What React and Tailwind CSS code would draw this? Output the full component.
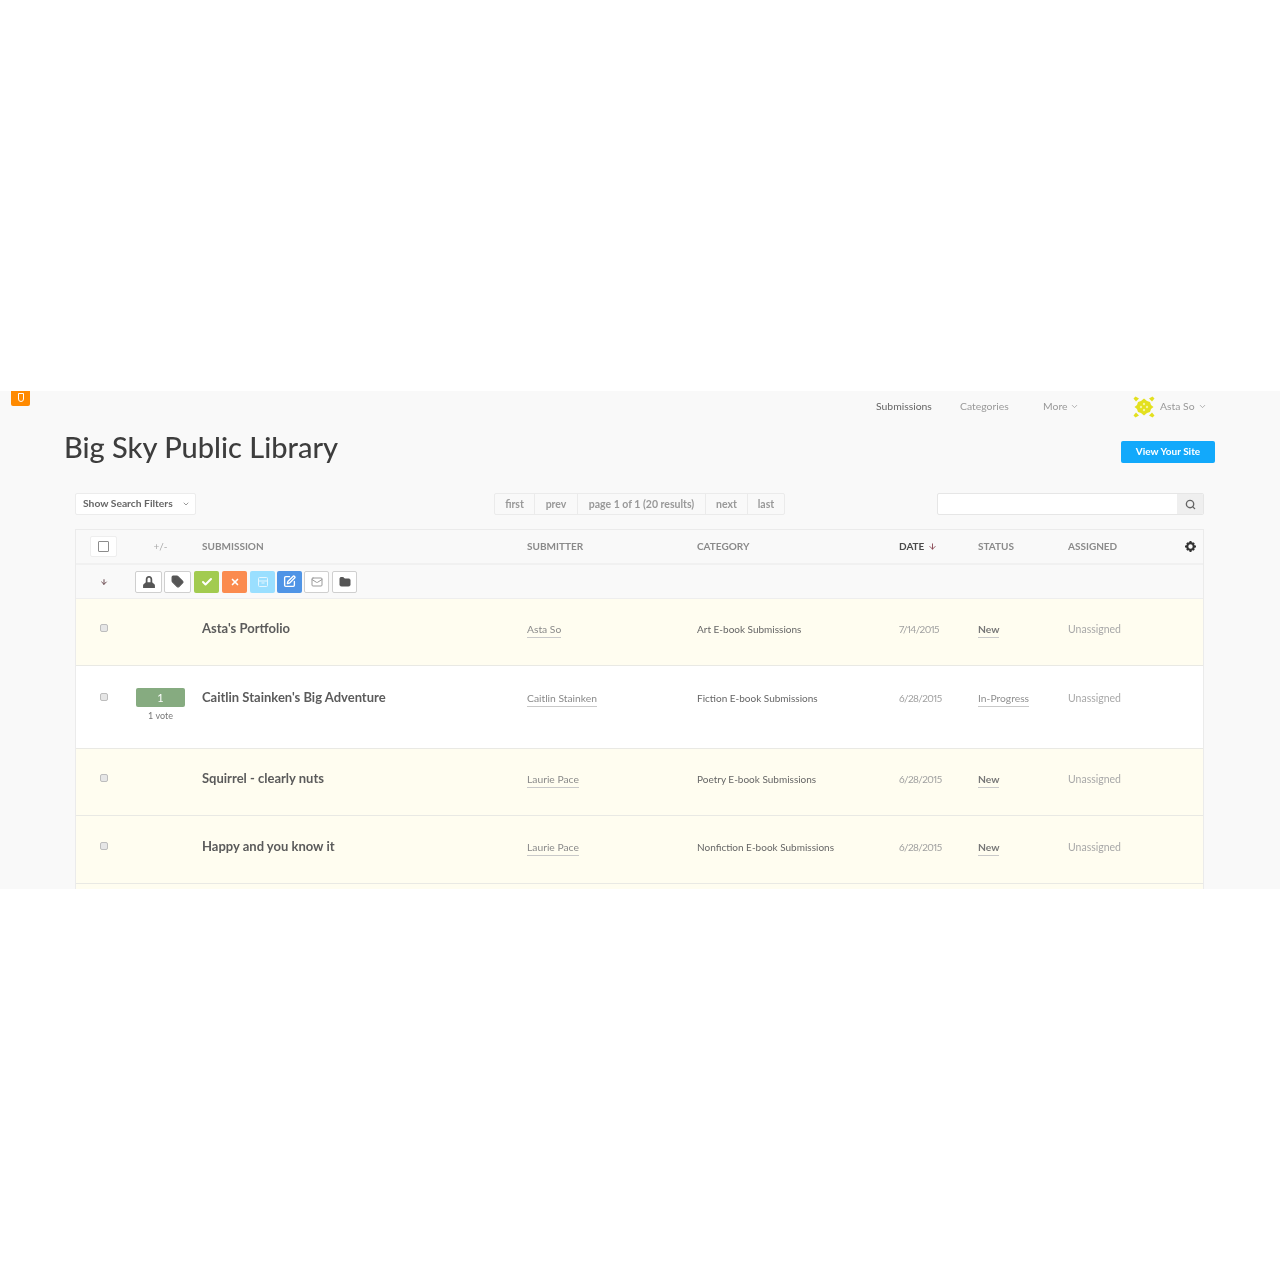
import React from 'react';
import { ChevronDown, Check, X, Mail, Folder, Tag, ArrowDown, SquarePen, Search } from 'lucide-react';

const rowCols = 'grid grid-cols-[55px_59px_337px_170px_202px_79px_90px_1fr]';

const rows = [
  { title: "Asta's Portfolio", who: 'Asta So', cat: 'Art E-book Submissions', date: '7/14/2015', status: 'New', height: 'h-[67px]', fresh: true },
  { title: "Caitlin Stainken's Big Adventure", who: 'Caitlin Stainken', cat: 'Fiction E-book Submissions', date: '6/28/2015', status: 'In-Progress', height: 'h-[83px] pt-[2px]', votes: 1 },
  { title: 'Squirrel - clearly nuts', who: 'Laurie Pace', cat: 'Poetry E-book Submissions', date: '6/28/2015', status: 'New', height: 'h-[67px]', fresh: true },
  { title: 'Happy and you know it', who: 'Laurie Pace', cat: 'Nonfiction E-book Submissions', date: '6/28/2015', status: 'New', height: 'h-[68px] pt-[1px]', fresh: true },
];

const Avatar = () => (
  <svg width="22" height="22" viewBox="0 0 22 22" fill="#e3e01f">
    <path d="M11 2.500l3 2.500 3 1 1 3 2.500 2-2.500 2-1 3-3 1-3 2.500-3-2.500-3-1-1-3-2.500-2 2.500-2 1-3 3-1z" />
    <g fill="#f4f3a0">
      <circle cx="11" cy="8" r="1.200" />
      <circle cx="8" cy="11" r="1.200" />
      <circle cx="14" cy="11" r="1.200" />
      <circle cx="11" cy="14" r="1.200" />
    </g>
    <path d="M.5 2.500L2.500.5 6 2.500 3 5.500zM21.500 2.500L19.500.5 16 2.500 19 5.500zM.5 19.500l2 2L6 19.500 3 16.500zM21.500 19.500l-2 2-3.500-2 3-3z" />
  </svg>
);

const UserLock = () => (
  <svg width="14" height="14" viewBox="0 0 13 13" fill="#555">
    <path d="M6.500 1C4.600 1 3.500 2.300 3.500 4v2.200c0 .8-.5 1.300-1.300 1.800C1.400 8.500 1 9 1 10v2h11v-2c0-1-.4-1.500-1.200-2-.8-.5-1.300-1-1.300-1.800V4c0-1.700-1.100-3-3-3zm0 1.600c.9 0 1.400.6 1.400 1.500v2.600H5.100V4.100c0-.9.5-1.500 1.400-1.500z" />
  </svg>
);

const Box = () => (
  <svg width="12" height="12" viewBox="0 0 12 12" fill="none" stroke="#e4f6ff" strokeWidth="1">
    <rect x="1.500" y="1.500" width="9" height="9" rx="1" />
    <path d="M1.500 5h9M4.500 7h3" />
  </svg>
);

const Gear = () => (
  <svg width="11" height="11" viewBox="0 0 11 11">
    <circle cx="5.500" cy="5.500" r="3.300" fill="none" stroke="#333" strokeWidth="2.200" />
    <path d="M4.500 0h2v2h-2zM4.500 9h2v2h-2zM0 4.500h2v2H0zM9 4.500h2v2H9zM1.200 2.600l1.400-1.400 1 1-1.400 1.400zM8.400 9.800l1.400-1.400-1-1-1.400 1.400zM9.800 2.600L8.400 1.200l-1 1 1.400 1.400zM2.600 9.800L1.200 8.400l1-1 1.400 1.400z" fill="#333" />
  </svg>
);

const ToolButton = ({ className, children }) => (
  <div className={`w-[25px] h-[22px] flex items-center justify-center rounded-[2px] ${className}`}>{children}</div>
);

const Toolbar = () => (
  <div className="flex items-center gap-[3px]">
    <ToolButton className="w-[27px] bg-white border border-[#cfcfcf]"><UserLock /></ToolButton>
    <ToolButton className="w-[27px] -ml-px bg-white border border-[#cfcfcf]"><Tag size={13} fill="#555" stroke="#555" /></ToolButton>
    <ToolButton className="bg-[#a2cb50]"><Check size={12} strokeWidth={4} color="#fff" /></ToolButton>
    <ToolButton className="bg-[#fb8b4f]"><X size={10} strokeWidth={4} color="#fff" /></ToolButton>
    <ToolButton className="bg-[#9adfff]"><Box /></ToolButton>
    <ToolButton className="-ml-px bg-[#4f94e6]"><SquarePen size={13} strokeWidth={2.500} color="#fff" /></ToolButton>
    <ToolButton className="-ml-px bg-white border border-[#cfcfcf]"><Mail size={12} color="#999" /></ToolButton>
    <ToolButton className="bg-white border border-[#cfcfcf]"><Folder size={12} fill="#555" stroke="#555" /></ToolButton>
  </div>
);

const Row = ({ row }) => (
  <div className={`${rowCols} ${row.height} border-b border-[#e9e9e4] ${row.fresh ? 'bg-[#fffdf0]' : 'bg-white'}`}>
    <div className="flex justify-center pt-[25px]">
      <div className="w-2 h-2 rounded-[2px] bg-[#e6e6e6] border border-[#bdbdbd]"></div>
    </div>
    <div className="flex flex-col items-center pt-[20px]">
      {row.votes && (
        <>
          <div className="w-[49px] h-[19px] rounded-[2px] bg-[#86ab80] text-white text-[11px] leading-[19px] text-center">{row.votes}</div>
          <div className="text-[9px] leading-[12px] mt-[3px] text-[#777]">{row.votes} vote</div>
        </>
      )}
    </div>
    <div className="pl-3 pt-[20px] text-[13px] leading-[18px] font-bold text-[#5b5b5b]">{row.title}</div>
    <div className="pt-[24px] text-[10.300px] leading-[13px] text-[#8a8a8a]">
      <span className="inline-block pb-px border-b border-[#c9c9c9]">{row.who}</span>
    </div>
    <div className="pt-[24px] text-[10px] leading-[13px] text-[#666]">{row.cat}</div>
    <div className="pt-[24px] text-[10px] leading-[13px] tracking-[-0.6px] proportional-nums text-[#a0a0a0]">{row.date}</div>
    <div className={`pt-[24px] text-[10.300px] leading-[13px] ${row.status === 'New' ? 'text-[#777] font-bold' : 'text-[#8f8f8f]'}`}>
      <span className="inline-block pb-px border-b border-[#c9c9c9]">{row.status}</span>
    </div>
    <div className="pt-[24px] text-[10.500px] leading-[13px] text-[#a8a8a8]">Unassigned</div>
  </div>
);

const App = () => {
  return (
    <div className="min-h-[1280px] bg-white pt-[391px] font-['Lato','Open_Sans',sans-serif]">
      <div className="relative h-[498px] overflow-hidden bg-[#f9f9f9] blur-[0.5px]">
        <div className="absolute left-[11px] top-0 w-[19px] h-[15px] rounded-b-[2px] bg-[#ff8a00] flex items-center justify-center">
          <div className="w-[6px] h-[9px] rounded-b-[3px] border border-white -mt-[3px]"></div>
        </div>

        {/* top nav */}
        <div className="flex items-center h-[30px] pt-[2px] text-[10.400px]">
          <div className="ml-[876px] w-[84px] text-[#666]">Submissions</div>
          <div className="w-[83px] text-[#999]">Categories</div>
          <div className="w-[90px] flex items-center gap-[3px] text-[#999]">More <ChevronDown size={9} /></div>
          <Avatar />
          <div className="ml-[5px] flex items-center gap-[3px] text-[#999]">Asta So <ChevronDown size={9} /></div>
        </div>

        <div className="flex items-center justify-between pl-[64px] pr-[65px] h-[55px]">
          <h1 className="text-[29px] leading-[34px] -mt-[3px] text-[#3d3d3d] font-medium">Big Sky Public Library</h1>
          <div className="w-[94px] h-[22px] mt-[7px] rounded-[2px] bg-[#12a9fb] text-white text-[10px] font-bold leading-[21px] text-center">View Your Site</div>
        </div>

        {/* filters, pager, search */}
        <div className="flex items-center h-[24px] mt-[16px] ml-[75px] mr-[76px]">
          <div className="w-[121px] h-[22px] flex items-center gap-[9px] pl-[7px] rounded-[2px] bg-white border border-[#ececec] text-[10.300px] font-bold text-[#666]">
            Show Search Filters <ChevronDown size={8} />
          </div>
          <div className="flex h-[22px] ml-[298px] rounded-[2px] border border-[#ebebeb] text-[10.500px] font-bold text-[#999] leading-[20px]">
            <div className="w-[39px] text-center">first</div>
            <div className="w-[43px] text-center border-l border-[#ebebeb]">prev</div>
            <div className="w-[128px] text-center border-l border-[#ebebeb]">page 1 of 1 (20 results)</div>
            <div className="w-[42px] text-center border-l border-[#ebebeb]">next</div>
            <div className="w-[37px] text-center border-l border-[#ebebeb]">last</div>
          </div>
          <div className="flex ml-auto w-[267px] h-[22px] rounded-[2px] border border-[#e6e6e6] bg-white overflow-hidden">
            <div className="flex-1"></div>
            <div className="w-[26px] flex items-center justify-center bg-[#efefef]">
              <Search size={11} strokeWidth={3} color="#666" />
            </div>
          </div>
        </div>

        {/* table */}
        <div className="mt-[13px] ml-[75px] mr-[76px] border-x border-t border-[#ebebeb]">
          <div className={`${rowCols} items-center h-[35px] border-b-2 border-[#f1f1f1] text-[10px] font-bold text-[#8a8a8a]`}>
            <div className="flex justify-center">
              <div className="w-[27px] h-[21px] flex items-center justify-center bg-white rounded-[2px] border border-[#eeeeee]">
                <div className="w-[11px] h-[11px] rounded-[1px] border border-[#8c8c8c]"></div>
              </div>
            </div>
            <div className="text-center font-normal text-[#aaa]">+/-</div>
            <div className="pl-3">SUBMISSION</div>
            <div>SUBMITTER</div>
            <div>CATEGORY</div>
            <div className="flex items-center gap-1 text-[#4a4a4a]">DATE <ArrowDown size={9} strokeWidth={2.500} color="#8a4a55" /></div>
            <div>STATUS</div>
            <div className="flex items-center justify-between pr-[7px]">
              ASSIGNED
              <Gear />
            </div>
          </div>
          <div className="flex items-center h-[34px] border-b border-[#eeeeee]">
            <div className="w-[55px] flex justify-center"><ArrowDown size={8} strokeWidth={3} color="#6a4a50" /></div>
            <div className="ml-[4px]"><Toolbar /></div>
          </div>
          {rows.map((row) => (
            <Row key={row.title} row={row} />
          ))}
          <div className="h-[10px] bg-[#fffdf0]"></div>
        </div>
      </div>
    </div>
  );
};

export default App;
